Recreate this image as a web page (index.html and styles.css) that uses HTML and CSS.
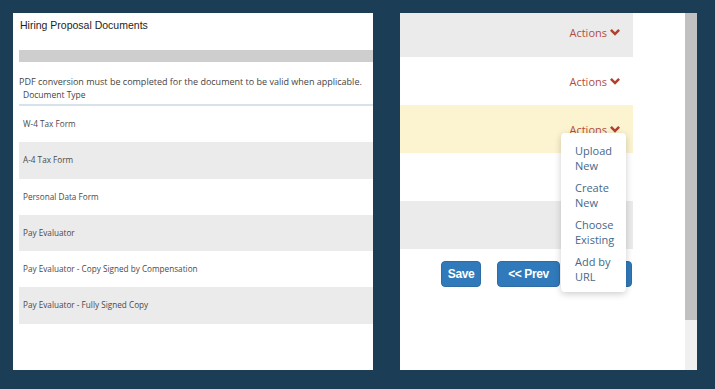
FILE: index.html
```html
<!DOCTYPE html>
<html lang="en">
<head>
    <meta charset="UTF-8">
    <title>Hiring Proposal Documents</title>
    <link rel="stylesheet" href="styles.css">
</head>
<body>
    <div class="screens">
        <div class="panel left">
            <div class="title">Hiring Proposal Documents</div>
            <div class="grey-bar"></div>
            <div class="note">PDF conversion must be completed for the document to be valid when applicable.</div>
            <div class="doc-head">Document Type</div>
            <div class="doc-list">
                <div class="doc-row">W-4 Tax Form</div>
                <div class="doc-row alt">A-4 Tax Form</div>
                <div class="doc-row">Personal Data Form</div>
                <div class="doc-row alt">Pay Evaluator</div>
                <div class="doc-row">Pay Evaluator - Copy Signed by Compensation</div>
                <div class="doc-row alt">Pay Evaluator - Fully Signed Copy</div>
            </div>
        </div>

        <div class="panel right">
            <div class="content">
                <div class="action-list">
                    <div class="action-row alt"><span class="actions">Actions <svg class="chev" viewBox="0 0 10 7"><polygon points="0,1.8 1.8,0 5,3.2 8.2,0 10,1.8 5,6.8"/></svg></span></div>
                    <div class="action-row"><span class="actions">Actions <svg class="chev" viewBox="0 0 10 7"><polygon points="0,1.8 1.8,0 5,3.2 8.2,0 10,1.8 5,6.8"/></svg></span></div>
                    <div class="action-row hl"><span class="actions">Actions <svg class="chev" viewBox="0 0 10 7"><polygon points="0,1.8 1.8,0 5,3.2 8.2,0 10,1.8 5,6.8"/></svg></span></div>
                    <div class="action-row"></div>
                    <div class="action-row alt"></div>
                </div>
                <div class="buttons">
                    <button class="btn save">Save</button>
                    <button class="btn prev">&lt;&lt; Prev</button>
                    <button class="btn next">Next &gt;&gt;</button>
                </div>
                <ul class="menu">
                    <li>Upload New</li>
                    <li>Create New</li>
                    <li>Choose Existing</li>
                    <li>Add by URL</li>
                </ul>
            </div>
            <div class="scrollbar"><div class="thumb"></div></div>
        </div>
    </div>
</body>
</html>
```

FILE: styles.css
```css
body {
    margin: 0;
    background-color: #1b3d56;
    font-family: 'Open Sans', 'Liberation Sans', sans-serif;
}
.screens {
    display: flex;
    gap: 27px;
    padding: 13px 0 0 13px;
    height: 357px;
}
.panel {
    background-color: #fff;
    height: 357px;
    overflow: hidden;
}

/* left screenshot */
.left {
    width: 354px;
    padding-left: 6px;
}
.title {
    font-family: 'Liberation Sans', Arial, sans-serif;
    font-size: 10.5px;
    line-height: 14px;
    color: #1e1e1e;
    padding: 5px 0 0 1px;
}
.grey-bar {
    height: 12px;
    margin-top: 18px;
    background-color: #cecece;
}
.note {
    font-size: 9px;
    line-height: 13px;
    color: #444;
    margin-top: 13px;
}
.doc-head {
    font-size: 8.5px;
    line-height: 12px;
    color: #444;
    padding: 1px 0 3px 4px;
    border-bottom: 2px solid #d6e3ea;
}
.doc-row {
    height: 36.3px;
    line-height: 36px;
    padding-left: 4px;
    font-size: 8.2px;
    color: #4a4a4a;
}
.alt {
    background-color: #ebebeb;
}

/* right screenshot */
.right {
    width: 297px;
    display: flex;
    position: relative;
}
.content {
    width: 285px;
    position: relative;
}
.action-list {
    width: 233px;
    margin-top: -6px;
}
.action-row {
    height: 48px;
    display: flex;
    align-items: center;
    justify-content: flex-end;
    padding-right: 13px;
}
.action-row:first-child {
    height: 50px;
}
.action-row.hl {
    background-color: #fcf3d1;
}
.actions {
    font-size: 11px;
    color: #b24d3f;
    display: flex;
    align-items: center;
    gap: 3px;
}
.chev {
    width: 10px;
    height: 7px;
    fill: #b2402f;
}
.buttons {
    display: flex;
    gap: 16px;
    padding: 12px 0 0 41px;
}
.btn {
    height: 26px;
    padding: 0;
    border: 1px solid #2e6da4;
    border-radius: 4px;
    background-color: #3079ba;
    color: #fff;
    font-family: 'Liberation Sans', Arial, sans-serif;
    font-weight: bold;
    font-size: 12px;
    letter-spacing: -0.4px;
}
.save {
    width: 40px;
}
.prev {
    width: 63px;
}
.next {
    width: 56px;
}
.menu {
    position: absolute;
    left: 161px;
    top: 120px;
    width: 51px;
    margin: 0;
    padding: 7px 0 4px 14px;
    list-style: none;
    background-color: #fff;
    border-radius: 4px;
    box-shadow: 0 2px 7px rgba(0, 0, 0, 0.2);
}
.menu li {
    font-size: 11px;
    line-height: 15px;
    color: #46688a;
    padding: 3px 0 4px;
}
.scrollbar {
    width: 12px;
    background-color: #f0f0f0;
}
.thumb {
    height: 307px;
    background-color: #c1c1c1;
}
```
